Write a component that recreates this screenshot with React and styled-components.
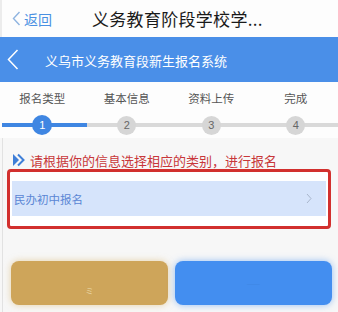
import React from "react";
import styled, { createGlobalStyle } from "styled-components";

const Global = createGlobalStyle`
  html, body { margin: 0; padding: 0; background: #f7f7f7; }
  body { font-family: "Noto Sans CJK SC", "Noto Sans", sans-serif; width: 338px; height: 312px; overflow: hidden; }
`;

const Page = styled.div`
  width: 338px;
  height: 312px;
  display: flex;
  flex-direction: column;
  background: #f7f7f7;
`;

const NavBar = styled.div`
  height: 37px;
  background: #fdfdfd;
  display: flex;
  align-items: center;
  border-left: 2px solid #ececec;
  box-sizing: border-box;
`;

const Back = styled.div`
  display: flex;
  align-items: center;
  gap: 3px;
  color: #4a90e2;
  font-size: 14px;
  padding-left: 10px;
  width: 80px;
  svg { display: block; }
`;

const NavTitle = styled.div`
  font-size: 17px;
  color: #1a1a1a;
  letter-spacing: 0.3px;
`;

const Banner = styled.div`
  height: 45px;
  background: #4a8fe8;
  display: flex;
  align-items: center;
  color: #fff;
  svg { display: block; margin-left: 7px; }
`;

const BannerTitle = styled.div`
  font-size: 13px;
  margin-left: 26px;
  margin-top: 2px;
`;

const Body = styled.div`
  flex: 1;
  margin-left: 2px;
  border-left: 1px solid #e2e2e2;
  display: flex;
  flex-direction: column;
`;

const Steps = styled.div`
  background: #fdfdfd;
  height: 56px;
  display: grid;
  grid-template-columns: repeat(4, 1fr);
  position: relative;
  margin-left: -3px;
`;

const Track = styled.div`
  position: absolute;
  left: 2px;
  right: 0;
  top: 41px;
  height: 4px;
  background: #d9d9d9;
  &::before {
    content: "";
    position: absolute;
    left: 0;
    top: 0;
    height: 4px;
    width: 85px;
    background: #3f86e2;
  }
`;

const Step = styled.div`
  display: flex;
  flex-direction: column;
  align-items: center;
  position: relative;
  z-index: 1;
`;

const StepLabel = styled.div`
  font-size: 11.5px;
  color: #555;
  margin-top: 8px;
  height: 17px;
  line-height: 17px;
`;

const Dot = styled.div`
  width: ${(p) => (p.$active ? 20 : 19)}px;
  height: ${(p) => (p.$active ? 20 : 19)}px;
  border-radius: 50%;
  background: ${(p) => (p.$active ? "#3f86e2" : "#d6d6d6")};
  color: ${(p) => (p.$active ? "#fff" : "#666")};
  font-family: "Liberation Sans", sans-serif;
  font-size: 11px;
  display: flex;
  align-items: center;
  justify-content: center;
  margin-top: ${(p) => (p.$active ? 8 : 8.5)}px;
`;

const Hint = styled.div`
  display: flex;
  align-items: center;
  gap: 4px;
  margin: 14px 0 0 9px;
  font-size: 13px;
  color: #c8373a;
  height: 16px;
  svg { display: block; }
`;

const Box = styled.div`
  margin: 1px 7px 0 4px;
  height: 60px;
  box-sizing: border-box;
  border: 3px solid #d2302e;
  border-radius: 4px;
  background: #fff;
  padding: 9px 2px 0 2px;
`;

const Option = styled.div`
  height: 35px;
  background: #d6e4fb;
  display: flex;
  align-items: center;
  justify-content: space-between;
  padding: 0 14px 0 2px;
  font-size: 11.5px;
  color: #5a86d4;
  svg { display: block; }
`;

const Buttons = styled.div`
  display: flex;
  gap: 7px;
  margin: 32px 6px 0 8px;
`;

const Button = styled.div`
  flex: 1;
  height: 44px;
  border-radius: 8px;
  background: ${(p) => p.$bg};
  box-shadow: 0 0 7px ${(p) => p.$glow};
  display: flex;
  align-items: center;
  justify-content: center;
  font-size: 8px;
  color: ${(p) => p.$fg};
  padding-top: ${(p) => p.$pt}px;
  box-sizing: border-box;
`;

const steps = ["报名类型", "基本信息", "资料上传", "完成"];

export default function App() {
  return (
    <Page>
      <Global />
      <NavBar>
        <Back>
          <svg width="9" height="15" viewBox="0 0 9 15">
            <path d="M7.5 1 L1.5 7.5 L7.5 14" fill="none" stroke="#8fb4e0" strokeWidth="1.4" />
          </svg>
          <span>返回</span>
        </Back>
        <NavTitle>义务教育阶段学校学...</NavTitle>
      </NavBar>
      <Banner>
        <svg width="12" height="21" viewBox="0 0 12 21">
          <path d="M10.5 1 L1.5 10.5 L10.5 20" fill="none" stroke="#fff" strokeWidth="1.5" />
        </svg>
        <BannerTitle>义乌市义务教育段新生报名系统</BannerTitle>
      </Banner>
      <Body>
        <Steps>
          <Track />
          {steps.map((s, i) => (
            <Step key={s}>
              <StepLabel>{s}</StepLabel>
              <Dot $active={i === 0}>{i + 1}</Dot>
            </Step>
          ))}
        </Steps>
        <Hint>
          <svg width="14" height="14" viewBox="0 0 14 14">
            <path d="M1 1 L7 7 L1 13 Z" fill="#3f7fd8" />
            <path d="M6 1.5 L11.5 7 L6 12.5" fill="none" stroke="#3f7fd8" strokeWidth="2" />
          </svg>
          <span>请根据你的信息选择相应的类别，进行报名</span>
        </Hint>
        <Box>
          <Option>
            <span>民办初中报名</span>
            <svg width="6" height="11" viewBox="0 0 6 11">
              <path d="M1 1 L5 5.5 L1 10" fill="none" stroke="#a9b6cc" strokeWidth="1" />
            </svg>
          </Option>
        </Box>
        <Buttons>
          <Button $bg="#cea55a" $glow="rgba(214,176,100,0.55)" $fg="#f3e6c4" $pt={14}>
            ミ
          </Button>
          <Button $bg="#438ef0" $glow="rgba(67,142,240,0.55)" $fg="#3f86e4" $pt={0}>
            ——
          </Button>
        </Buttons>
      </Body>
    </Page>
  );
}
